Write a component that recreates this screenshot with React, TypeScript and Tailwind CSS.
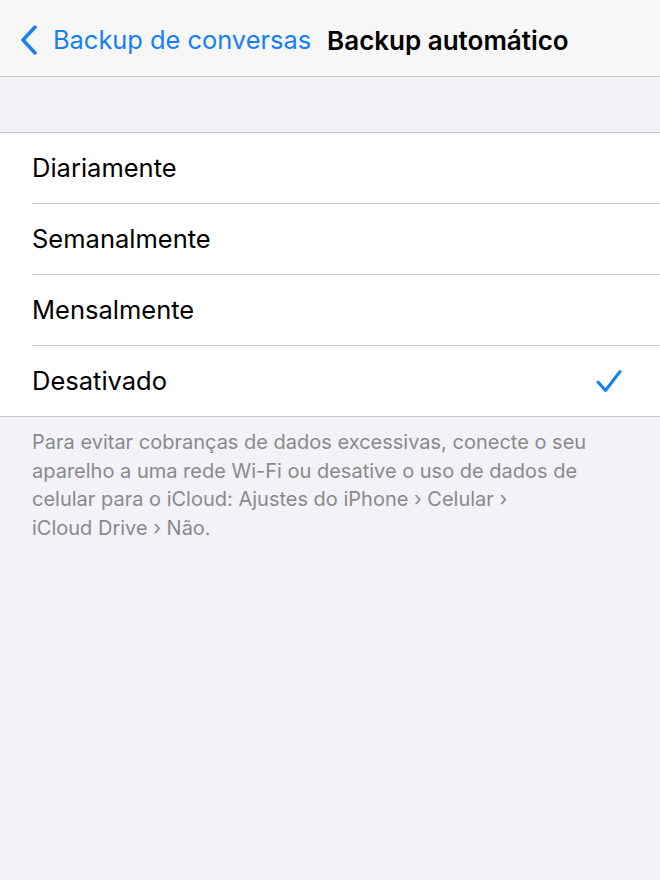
import { useState } from "react";

const OPTIONS = ["Diariamente", "Semanalmente", "Mensalmente", "Desativado"];

function Chevron() {
  return (
    <svg width="20" height="30" viewBox="0 0 20 30" fill="none" className="shrink-0">
      <path d="M16 2 L4 15 L16 28" stroke="#147efb" strokeWidth="3.4" strokeLinecap="round" strokeLinejoin="round" />
    </svg>
  );
}

function Check() {
  return (
    <svg width="26" height="24" viewBox="0 0 26 24" fill="none">
      <path d="M2 13 L9.5 21.5 L24 2.5" stroke="#147efb" strokeWidth="3" strokeLinecap="round" strokeLinejoin="round" />
    </svg>
  );
}

export default function App() {
  const [selected, setSelected] = useState("Desativado");

  return (
    <main className="min-h-[880px] bg-[#f2f2f7] font-['Inter','Liberation_Sans',sans-serif]">
      <header className="flex h-[77px] items-center border-b border-[#c8c7cc] bg-[#f7f7f7] pl-[19px] pt-[5px]">
        <button className="flex items-center gap-[14px] text-[25.4px] text-[#147efb]">
          <Chevron />
          <span>Backup de conversas</span>
        </button>
        <h1 className="ml-[16px] text-[26px] font-semibold text-black">Backup automático</h1>
      </header>

      <div className="h-[55px]" />

      <ul className="border-y border-[#c8c7cc] bg-white">
        {OPTIONS.map((opt, i) => (
          <li key={opt} className="pl-[32px]">
            <button
              onClick={() => setSelected(opt)}
              className={`flex h-[70px] w-full items-center justify-between pr-[38px] text-left text-[25.5px] text-black ${
                i < OPTIONS.length - 1 ? "h-[71px] border-b border-[#c8c7cc]" : ""
              }`}
            >
              <span>{opt}</span>
              {selected === opt && <Check />}
            </button>
          </li>
        ))}
      </ul>

      <p className="px-[32px] pt-[11px] text-[20px] leading-[28.7px] text-[#8a8a8e]">
        Para evitar cobranças de dados excessivas, conecte o seu aparelho a uma rede Wi-Fi ou desative o uso de dados de
        celular para o iCloud: Ajustes do iPhone › Celular › iCloud{"\u00a0"}Drive › Não.
      </p>
    </main>
  );
}
